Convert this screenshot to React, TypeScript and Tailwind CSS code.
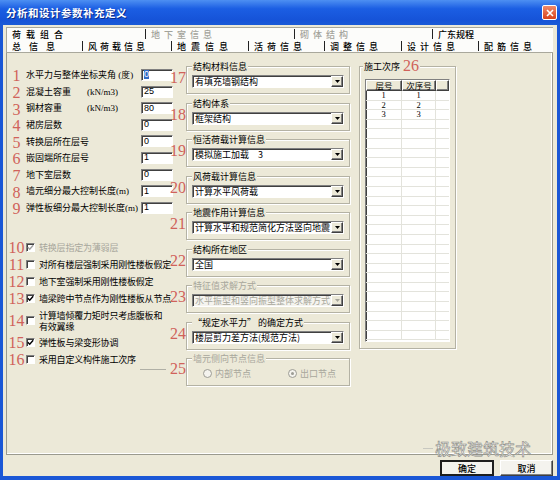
import React from "react";

const cjk = "font-['Noto_Sans_CJK_SC',sans-serif]";
const serif = "font-['Liberation_Serif',serif]";
const red = "text-[#d0625a]";
const sunken =
  "border border-t-[#808080] border-l-[#808080] border-r-white border-b-white shadow-[inset_1px_1px_0_#404040]";
const raised =
  "border border-t-white border-l-white border-r-[#404040] border-b-[#404040] shadow-[inset_-1px_-1px_0_#808080]";

const fields = [
  { n: "1", label: "水平力与整体坐标夹角", tail: " (度)", value: "0", selected: true },
  { n: "2", label: "混凝土容重", unit: "(kN/m3)", value: "25" },
  { n: "3", label: "钢材容重", unit: "(kN/m3)", value: "80" },
  { n: "4", label: "裙房层数", value: "0" },
  { n: "5", label: "转换层所在层号", value: "0" },
  { n: "6", label: "嵌固端所在层号", value: "1" },
  { n: "7", label: "地下室层数", value: "0" },
  { n: "8", label: "墙元细分最大控制长度", tail: "(m)", value: "1" },
  { n: "9", label: "弹性板细分最大控制长度", tail: "(m)", value: "1" },
];

const checks = [
  { n: "10", label: ["转换层指定为薄弱层"], checked: true, disabled: true },
  { n: "11", label: ["对所有楼层强制采用刚性楼板假定"] },
  { n: "12", label: ["地下室强制采用刚性楼板假定"] },
  { n: "13", label: ["墙梁跨中节点作为刚性楼板从节点"], checked: true },
  { n: "14", label: ["计算墙倾覆力矩时只考虑腹板和", "有效翼缘"] },
  { n: "15", label: ["弹性板与梁变形协调"], checked: true },
  { n: "16", label: ["采用自定义构件施工次序"] },
];

const groups = [
  { n: "17", title: "结构材料信息", value: "有填充墙钢结构" },
  { n: "18", title: "结构体系", value: "框架结构" },
  { n: "19", title: "恒活荷载计算信息", value: "模拟施工加载　3" },
  { n: "20", title: "风荷载计算信息", value: "计算水平风荷载" },
  { n: "21", title: "地震作用计算信息", value: "计算水平和规范简化方法竖向地震" },
  { n: "22", title: "结构所在地区", value: "全国" },
  { n: "23", title: "特征值求解方式", value: "水平振型和竖向振型整体求解方式", disabled: true },
  { n: "24", title: "“规定水平力” 的确定方式", value: "楼层剪力差方法(规范方法)" },
];

const tabsTop = [
  { label: "荷载组合", w: "w-[138px]", cls: "tracking-[5px] text-black" },
  { label: "地下室信息", w: "w-[149px]", cls: "tracking-[4px] text-[#a3a39a]", sep: true },
  { label: "砌体结构", w: "w-[138px]", cls: "tracking-[4px] text-[#a3a39a]", sep: true },
  { label: "广东规程", w: "flex-1", cls: "text-black", sep: true },
];

const tabsBottom = [
  { label: "总信息", w: "w-[75px]", cls: "tracking-[8px]" },
  { label: "风荷载信息", w: "w-[89px]", cls: "tracking-[3px]", sep: true },
  { label: "地震信息", w: "w-[77px]", cls: "tracking-[5px]", sep: true },
  { label: "活荷信息", w: "w-[76px]", cls: "tracking-[4px]", sep: true },
  { label: "调整信息", w: "w-[77px]", cls: "tracking-[4px]", sep: true },
  { label: "设计信息", w: "w-[77px]", cls: "tracking-[4px]", sep: true },
  { label: "配筋信息", w: "flex-1", cls: "tracking-[4px]", sep: true },
];

function Num({ n, className = "" }: { n: string; className?: string }) {
  return <span className={`${serif} ${red} text-[16px] leading-none ${className}`}>{n}</span>;
}

function Check({ checked, disabled }: { checked?: boolean; disabled?: boolean }) {
  return (
    <span className={`flex h-[9px] w-[9px] shrink-0 items-center justify-center bg-white ${sunken}`}>
      {checked && (
        <svg width="7" height="7" viewBox="0 0 7 7">
          <path d="M0.8 3.3 L2.7 5.2 L6.2 1.2" fill="none" stroke={disabled ? "#a0a0a0" : "#000"} strokeWidth="1.4" />
        </svg>
      )}
    </span>
  );
}

function Radio({ checked }: { checked?: boolean }) {
  return (
    <span className="flex h-[9px] w-[9px] items-center justify-center rounded-full border border-[#9c9c94] bg-[#f4f3ee]">
      {checked && <span className="h-[3px] w-[3px] rounded-full bg-[#9c9c94]" />}
    </span>
  );
}

function Combo({ value, disabled }: { value: string; disabled?: boolean }) {
  return (
    <div className={`mx-[5px] mt-[8px] flex h-[13px] ${disabled ? "bg-[#f5f4ef]" : "bg-white"} ${sunken}`}>
      <div
        className={`flex flex-1 items-center whitespace-nowrap pl-[2px] text-[9px] leading-none ${
          disabled ? "text-[#a8a79c]" : "text-black"
        }`}
      >
        {value}
      </div>
      <div className={`flex w-[12px] shrink-0 items-center justify-center bg-[#ece9d8] ${raised}`}>
        <svg width="5" height="3" viewBox="0 0 5 3">
          <path d="M0 0 H5 L2.5 3 Z" fill={disabled ? "#a8a79c" : "#000"} />
        </svg>
      </div>
    </div>
  );
}

function GroupBox({ title, disabled, children }: { title: React.ReactNode; disabled?: boolean; children: React.ReactNode }) {
  return (
    <div className="relative h-[28px] flex-1 border border-[#b4b2a4] shadow-[inset_1px_1px_0_#fff,1px_1px_0_#fff]">
      <span
        className={`absolute left-[5px] top-[-1px] -translate-y-1/2 whitespace-nowrap bg-[#ece9d8] px-[1px] text-[9px] leading-none ${
          disabled ? "text-[#a8a79c]" : "text-black"
        }`}
      >
        {title}
      </span>
      {children}
    </div>
  );
}

export default function App() {
  return (
    <div className={`${cjk} flex h-[480px] w-[560px] flex-col overflow-hidden bg-[#1a57d6]`}>
      {/* title bar */}
      <div className="flex h-[25px] items-center justify-between bg-[linear-gradient(#4d8ff2,#1b5ee3_35%,#1653d8_80%,#1a5ad6)] pl-[6px] pr-[3px]">
        <span className="text-[10.5px] font-bold tracking-[0.5px] text-white [text-shadow:1px_1px_0_#0a2c8a]">
          分析和设计参数补充定义
        </span>
        <div className="flex h-[15px] w-[15px] items-center justify-center rounded-[2px] border border-white bg-[linear-gradient(#f08a6a,#d8421c)]">
          <svg width="8" height="8" viewBox="0 0 8 8">
            <path d="M1 1 L7 7 M7 1 L1 7" stroke="#fff" strokeWidth="1.6" />
          </svg>
        </div>
      </div>

      {/* body */}
      <div className="relative mx-[3px] mb-[4px] flex flex-1 flex-col bg-[#ece9d8] pt-[2px]">
        {/* tabs */}
        <div className="ml-[3px] mr-[4px] border-l border-t border-[#a9a89c] bg-[#fcfcfa]">
          <div className="flex h-[12px] items-center text-[9px] font-medium">
            {tabsTop.map((t) => (
              <div key={t.label} className={`flex h-full items-center ${t.w}`}>
                {t.sep && <span className="h-[10px] w-px bg-[#222]" />}
                <span className={`pl-[5px] leading-none ${t.cls}`}>{t.label}</span>
              </div>
            ))}
          </div>
          <div className="flex h-[13px] items-center border-b border-[#a9a89c] text-[9px] font-medium text-black">
            {tabsBottom.map((t) => (
              <div key={t.label} className={`flex h-full items-center ${t.w}`}>
                {t.sep && <span className="h-[10px] w-px bg-[#222]" />}
                <span className={`pl-[5px] leading-none ${t.cls}`}>{t.label}</span>
              </div>
            ))}
          </div>
        </div>

        {/* panel */}
        <div className="ml-[3px] mr-[4px] flex h-[402px] border-b border-l border-r border-[#9a9a8e] shadow-[inset_-1px_-1px_0_#fff]">
          {/* left column */}
          <div className="w-[166px] shrink-0 pt-[13.7px]">
            {fields.map((f) => (
              <div key={f.n} className="flex h-[16.6px] items-center">
                <Num n={f.n} className="w-[19px] shrink-0 pt-[3px] text-center" />
                <div className="w-[115px] shrink-0 whitespace-nowrap text-[9px] leading-none text-black">
                  {f.unit ? (
                    <>
                      <span className="inline-block w-[61px]">{f.label}</span>
                      <span className={`${serif} text-[9px]`}>{f.unit}</span>
                    </>
                  ) : (
                    <>
                      {f.label}
                      {f.tail && <span className={`${serif} text-[9px]`}>{f.tail}</span>}
                    </>
                  )}
                </div>
                <div className={`flex h-[12px] w-[32px] shrink-0 items-center bg-white pl-[2px] ${sunken}`}>
                  <span
                    className={`font-['Liberation_Sans',sans-serif] text-[9px] leading-none ${
                      f.selected ? "bg-[#316ac5] text-white" : "text-black"
                    }`}
                  >
                    {f.value}
                  </span>
                </div>
              </div>
            ))}

            <div className="mt-[23.4px]">
              {checks.map((c) => (
                <div key={c.n} className={`flex items-center ${c.label.length > 1 ? "h-[27px]" : "h-[17px]"}`}>
                  <Num n={c.n} className="w-[19px] shrink-0 text-center" />
                  <Check checked={c.checked} disabled={c.disabled} />
                  <div
                    className={`ml-[4px] whitespace-nowrap text-[9px] leading-[11px] tracking-[-0.2px] ${
                      c.disabled ? "text-[#a8a79c]" : "text-black"
                    }`}
                  >
                    {c.label.map((l) => (
                      <div key={l}>{l}</div>
                    ))}
                  </div>
                </div>
              ))}
            </div>
          </div>

          {/* middle column */}
          <div className="w-[177px] shrink-0 pt-[7px]">
            {groups.map((g) => (
              <div key={g.n} className="flex h-[36.5px] pt-[6px]">
                <div className="flex w-[13px] shrink-0 justify-end overflow-visible whitespace-nowrap">
                  <Num n={g.n} className="mt-[4px]" />
                </div>
                <GroupBox title={g.title} disabled={g.disabled}>
                  <Combo value={g.value} disabled={g.disabled} />
                </GroupBox>
              </div>
            ))}
            <div className="flex h-[36.5px] pt-[6px]">
              <div className="flex w-[13px] shrink-0 items-start justify-end whitespace-nowrap">
                <span className="mr-[4px] mt-[11px] h-px w-[26px] shrink-0 bg-[#b0b0a6]" />
                <Num n="25" className="mt-[3px]" />
              </div>
              <GroupBox title="墙元侧向节点信息" disabled>
                <div className="mt-[10px] flex items-center text-[9px] leading-none text-[#a8a79c]">
                  <div className="ml-[16px] flex w-[85px] items-center gap-[3px]">
                    <Radio />
                    <span>内部节点</span>
                  </div>
                  <div className="flex items-center gap-[3px]">
                    <Radio checked />
                    <span>出口节点</span>
                  </div>
                </div>
              </GroupBox>
            </div>
          </div>

          {/* right column */}
          <div className="ml-[9px] w-[97px] shrink-0 pt-[13px]">
            <div className="relative h-[283px] border border-[#b4b2a4] px-[5px] pt-[12px] shadow-[inset_1px_1px_0_#fff,1px_1px_0_#fff]">
              <span className="absolute left-[3px] top-[-1px] flex -translate-y-1/2 items-center gap-[3px] bg-[#ece9d8] px-[1px] text-[9px] leading-none text-black">
                施工次序
                <Num n="26" />
              </span>
              <div className={`flex h-[263px] flex-col overflow-hidden bg-white ${sunken}`}>
                <div className="grid h-[11px] shrink-0 grid-cols-[36px_34px_1fr] text-[8.5px] leading-none text-black">
                  <div className={`flex items-center justify-center bg-[#ece9d8] ${raised}`}>层号</div>
                  <div className={`flex items-center justify-center bg-[#ece9d8] ${raised}`}>次序号</div>
                  <div className={`bg-[#ece9d8] ${raised}`} />
                </div>
                {Array.from({ length: 26 }).map((_, i) => (
                  <div
                    key={i}
                    className={`${serif} grid h-[9.6px] shrink-0 grid-cols-[36px_34px_1fr] text-[8.5px] leading-none text-black`}
                  >
                    <div className="flex items-center justify-center border-b border-r border-[#e3e3dc]">
                      {i < 3 ? i + 1 : ""}
                    </div>
                    <div className="flex items-center justify-center border-b border-r border-[#e3e3dc]">
                      {i < 3 ? i + 1 : ""}
                    </div>
                    <div className="border-b border-[#e3e3dc]" />
                  </div>
                ))}
              </div>
            </div>
          </div>
        </div>

        {/* buttons */}
        <div className="mt-[5px] flex justify-end gap-[6px] pr-[4px] text-[9px] font-medium leading-none text-black">
          <button className="flex h-[16px] w-[54px] items-center justify-center border-2 border-[#1e1e1e] bg-[#f4f3ee]">
            确定
          </button>
          <button className={`flex h-[16px] w-[53px] items-center justify-center bg-[#f4f3ee] ${raised}`}>
            取消
          </button>
        </div>

        {/* watermark */}
        <div className="pointer-events-none absolute left-[420px] top-[415px] flex items-center text-[16px] leading-none text-white [-webkit-text-stroke:0.6px_#8a8a84]">
          <span className="mr-[2px] h-px w-[10px] bg-[#c8c8c0]" />
          极致建筑技术
        </div>
      </div>
    </div>
  );
}
